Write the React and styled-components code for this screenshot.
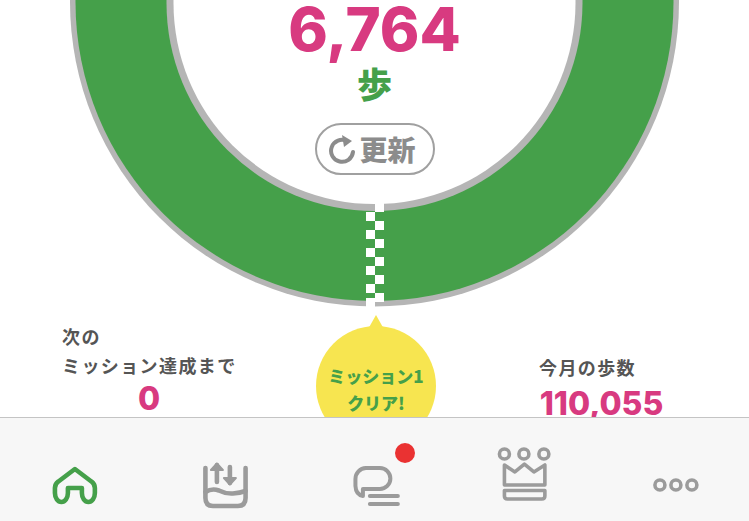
import React from 'react';
import styled, { createGlobalStyle } from 'styled-components';

const pink = '#d83a80';
const green = '#45a04a';
const iconGray = '#9b9b9b';
const latin = '"Inter", "Noto Sans CJK JP", sans-serif';
const cjk = '"Noto Sans CJK JP", sans-serif';

const GlobalStyle = createGlobalStyle`
  html, body {
    margin: 0;
    padding: 0;
    background: #fff;
  }
`;

const Page = styled.div`
  width: 749px;
  height: 521px;
  display: flex;
  flex-direction: column;
  overflow: hidden;
  background: #fff;
`;

const Main = styled.main`
  height: 417px;
  flex: none;
  overflow: hidden;
`;

const Gauge = styled.section`
  position: relative;
  height: 322px;
`;

const Ring = styled.svg`
  display: block;
`;

const GaugeCenter = styled.div`
  position: absolute;
  top: 1px;
  left: 0;
  right: 0;
  display: flex;
  flex-direction: column;
  align-items: center;
`;

const StepCount = styled.div`
  font-family: ${latin};
  font-weight: 800;
  font-size: 60px;
  line-height: 56px;
  color: ${pink};
`;

const StepUnit = styled.div`
  margin-top: 4px;
  font-family: ${cjk};
  font-weight: 900;
  font-size: 35px;
  line-height: 44px;
  color: ${green};
`;

const RefreshButton = styled.button`
  margin-top: 18px;
  width: 120px;
  height: 52px;
  padding: 0 5px 0 0;
  display: flex;
  align-items: center;
  justify-content: center;
  gap: 2px;
  background: #fff;
  border: 2px solid #a0a0a0;
  border-radius: 26px;
  font-family: ${cjk};
  font-weight: 900;
  font-size: 28px;
  color: #8c8c8c;
`;

const Stats = styled.section`
  display: grid;
  grid-template-columns: 316px 120px 1fr;
`;

const Stat = styled.div`
  padding-left: ${props => props.inset}px;
  padding-top: ${props => props.top}px;
`;

const StatLabel = styled.div`
  font-family: ${cjk};
  font-weight: 700;
  font-size: 18px;
  line-height: 29px;
  letter-spacing: 1.4px;
  color: #555;
  white-space: nowrap;
`;

const StatValue = styled.div`
  width: ${props => props.width}px;
  margin-top: ${props => props.gap}px;
  text-align: center;
  font-family: ${latin};
  font-weight: 800;
  font-size: 32px;
  line-height: 36px;
  color: ${pink};
`;

const Bubble = styled.div`
  position: relative;
  width: 120px;
  height: 120px;
  margin-top: 4px;
  border-radius: 50%;
  background: #f7e550;
  text-align: center;
  font-family: ${cjk};
  font-weight: 900;
  font-size: 17px;
  line-height: 27px;
  color: ${green};
  padding-top: 36px;
  box-sizing: border-box;

  &::before {
    content: '';
    position: absolute;
    top: -11px;
    left: 50%;
    margin-left: -9px;
    border-left: 9px solid transparent;
    border-right: 9px solid transparent;
    border-bottom: 16px solid #f7e550;
  }
`;

const Nav = styled.nav`
  flex: 1;
  display: grid;
  grid-template-columns: repeat(5, 1fr);
  background: #f7f7f7;
  border-top: 1px solid #c4c4c4;
`;

const NavCell = styled.div`
  position: relative;
`;

const NavIcon = styled.svg`
  display: block;
  width: 100%;
  height: 103px;
  fill: none;
  stroke: ${props => props.color || iconGray};
  stroke-width: ${props => props.weight || 4}px;
  stroke-linecap: round;
  stroke-linejoin: round;
`;

const Badge = styled.span`
  position: absolute;
  top: 25px;
  left: 95px;
  width: 20px;
  height: 20px;
  border-radius: 50%;
  background: #ea3232;
`;

const checkerRows = [0, 1, 2, 3, 4, 5, 6, 7, 8, 9];

function GaugeRing() {
  return (
    <Ring width="749" height="322" viewBox="0 0 749 322">
      <circle cx="374.5" cy="2" r="304.5" fill="#b5b5b5" />
      <circle cx="374.5" cy="2" r="299" fill={green} />
      <circle cx="374.5" cy="3" r="208" fill="#b5b5b5" />
      <circle cx="374.5" cy="3" r="201" fill="#fff" />
      <rect x="375" y="195" width="9" height="17" fill="#fff" />
      {checkerRows.map(i => (
        <rect
          key={i}
          x={i % 2 === 0 ? 366 : 375}
          y={212 + i * 9}
          width="9"
          height="9"
          fill="#fff"
        />
      ))}
      <rect x="366" y="298" width="9" height="12" fill="#fff" />
    </Ring>
  );
}

function RefreshIcon() {
  return (
    <svg width="29" height="32" viewBox="0 0 29 32" fill="none">
      <path d="M19 8 A11 11 0 1 0 25 19" stroke="#8c8c8c" strokeWidth="4" strokeLinecap="round" />
      <path d="M14 2 L24 8 L16 14 Z" fill="#8c8c8c" />
    </svg>
  );
}

export default function App() {
  return (
    <Page>
      <GlobalStyle />
      <Main>
        <Gauge>
          <GaugeRing />
          <GaugeCenter>
            <StepCount>6,764</StepCount>
            <StepUnit>歩</StepUnit>
            <RefreshButton>
              <RefreshIcon />
              更新
            </RefreshButton>
          </GaugeCenter>
        </Gauge>
        <Stats>
          <Stat inset={62} top={0}>
            <StatLabel>次の<br />ミッション達成まで</StatLabel>
            <StatValue width={174} gap={1}>0</StatValue>
          </Stat>
          <Bubble>ミッション1<br />クリア!</Bubble>
          <Stat inset={103} top={31}>
            <StatLabel>今月の歩数</StatLabel>
            <StatValue width={125} gap={4}>110,055</StatValue>
          </Stat>
        </Stats>
      </Main>
      <Nav>
        <NavCell>
          <NavIcon viewBox="0 0 150 103" color={green} weight={4.6}>
            <path d="M75 51 L91.5 63.5 Q95 66 95 70 V75 A6.5 9 0 0 1 82 75 V70 H68 V75 A6.5 9 0 0 1 55 75 V70 Q55 66 58.5 63.5 Z" />
          </NavIcon>
        </NavCell>
        <NavCell>
          <NavIcon viewBox="0 0 150 103" weight={4.6}>
            <path d="M55.5 50 V80 Q55.5 88 63 88 H88 Q95.7 88 95.7 80 V50" />
            <path d="M55.5 74 Q62 70 69 72.5 Q76 76 83 75.5 Q90 75 95.7 73" />
            <path d="M67 64 V47" />
            <path d="M80 49 V65" />
            <path d="M61 52 L67 45.5 L73 52 Z" fill={iconGray} strokeWidth="2" />
            <path d="M74 60 L80 66.5 L86 60 Z" fill={iconGray} strokeWidth="2" />
          </NavIcon>
        </NavCell>
        <NavCell>
          <NavIcon viewBox="0 0 150 103">
            <path d="M66 50 H80 A10.5 10.5 0 0 1 80 71 H63 V78 Q56 77 55.5 68 V61 A11 11 0 0 1 66 50 Z" />
            <path d="M70 78 H98 M70 86 H98" />
          </NavIcon>
          <Badge />
        </NavCell>
        <NavCell>
          <NavIcon viewBox="0 0 150 103" weight={3.6}>
            <circle cx="55.5" cy="36" r="5" />
            <circle cx="75" cy="36" r="5" />
            <circle cx="95" cy="36" r="5" />
            <path d="M55.5 47 L66 54 L75.5 46 L85 54 L96 47 V67 H55.5 Z" />
            <path d="M55.5 72.5 H96 V78 Q96 81 93 81 H58.5 Q55.5 81 55.5 78 Z" />
          </NavIcon>
        </NavCell>
        <NavCell>
          <NavIcon viewBox="0 0 150 103" weight={3.6}>
            <circle cx="61" cy="67" r="5" />
            <circle cx="77" cy="67" r="5" />
            <circle cx="93" cy="67" r="5" />
          </NavIcon>
        </NavCell>
      </Nav>
    </Page>
  );
}
